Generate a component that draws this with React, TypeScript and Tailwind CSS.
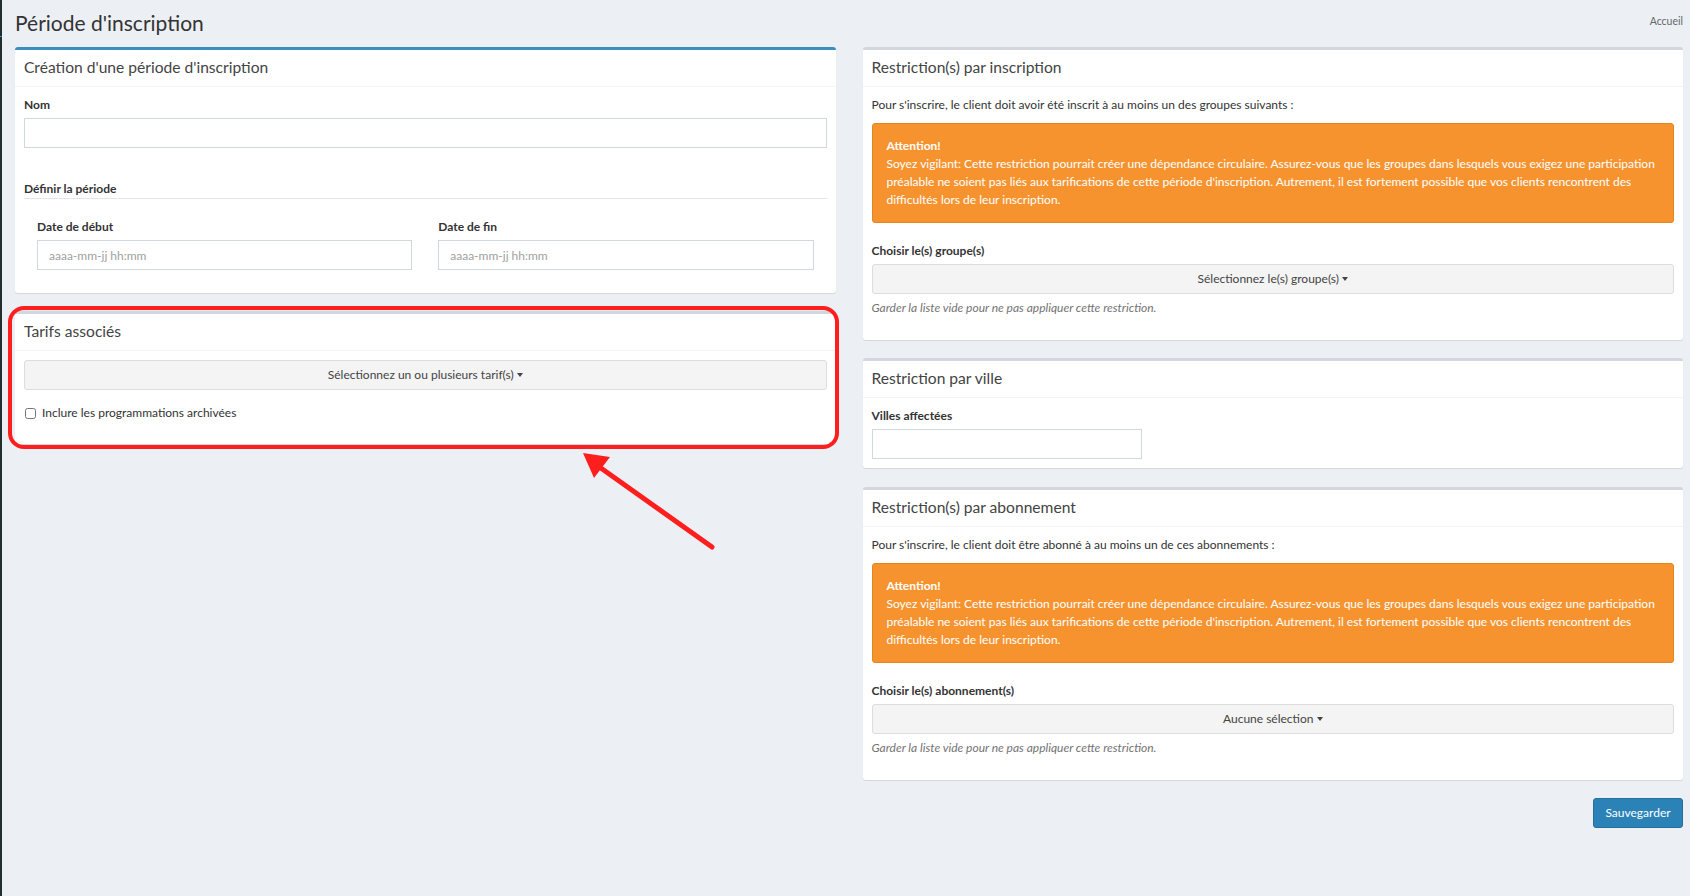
import type { ReactNode } from 'react';

/* ─── Small building blocks ────────────────────────────────────── */

function Box({
  title,
  accent = false,
  className = '',
  children,
}: {
  title: string;
  accent?: boolean;
  className?: string;
  children: ReactNode;
}) {
  return (
    <div
      className={`bg-white rounded-[3px] border-t-[3px] shadow-[0_1px_1px_rgba(0,0,0,0.1)] ${
        accent ? 'border-[#3c8dbc]' : 'border-[#d2d6de]'
      } ${className}`}
    >
      <div className="h-[37px] px-[9px] flex items-center border-b border-[#f4f4f4]">
        <h3 className="text-[15.6px] leading-none text-[#444] -mt-[1px]">{title}</h3>
      </div>
      {children}
    </div>
  );
}

function Label({ children }: { children: ReactNode }) {
  return <label className="block text-[12px] leading-[18px] font-bold text-[#333]">{children}</label>;
}

function TextInput({ placeholder, className = '' }: { placeholder?: string; className?: string }) {
  return (
    <input
      type="text"
      placeholder={placeholder}
      className={`block h-[30px] border border-[#d2d6de] bg-white px-[11px] text-[12px] text-[#555] placeholder:text-[#a0a0a0] outline-none ${className}`}
    />
  );
}

function Dropdown({ label }: { label: string }) {
  return (
    <button
      type="button"
      className="w-full h-[30px] flex items-center justify-center gap-[3px] bg-[#f4f4f4] border border-[#ddd] rounded-[3px] text-[12px] text-[#444]"
    >
      {label}
      <span className="inline-block w-0 h-0 border-x-[3.5px] border-x-transparent border-t-[4px] border-t-[#444]" />
    </button>
  );
}

function HelpText() {
  return (
    <p className="mt-[5px] text-[12px] leading-[18px] italic text-[#737373]">
      Garder la liste vide pour ne pas appliquer cette restriction.
    </p>
  );
}

function CircularWarning() {
  return (
    <div className="mt-[9px] border border-[#e3861f] bg-[#f7932f] rounded-[3px] px-[14px] py-[13px] text-[12px] leading-[18px] text-white">
      <strong className="block font-bold">Attention!</strong>
      <span className="block whitespace-nowrap">
        Soyez vigilant: Cette restriction pourrait créer une dépendance circulaire. Assurez-vous que les groupes
        dans lesquels vous exigez une participation
      </span>
      <span className="block whitespace-nowrap">
        préalable ne soient pas liés aux tarifications de cette période d'inscription. Autrement, il est fortement
        possible que vos clients rencontrent des
      </span>
      <span className="block">difficultés lors de leur inscription.</span>
    </div>
  );
}

/* ─── Callout drawn around the tariffs box ─────────────────────── */

function CalloutArrow() {
  return (
    <svg
      className="absolute left-[555px] top-[130px] pointer-events-none"
      width="150"
      height="115"
      viewBox="0 0 150 115"
      fill="none"
    >
      <line x1="28" y1="25" x2="142" y2="106" stroke="#ff1e1e" strokeWidth="5" strokeLinecap="round" />
      <polygon points="13,12 40,16 24,37" fill="#ff1e1e" />
    </svg>
  );
}

/* ─── Page ─────────────────────────────────────────────────────── */

export default function App() {
  return (
    <div className="min-h-[896px] flex bg-[#ecf0f5] font-['Lato',sans-serif] text-[#333]">
      {/* sidebar edge */}
      <div className="w-[2px] flex flex-col shrink-0">
        <div className="h-[36px] bg-[#222d32]" />
        <div className="h-[1px] bg-[#3c8dbc]" />
        <div className="flex-1 bg-[#222d32]" />
      </div>

      <div className="flex-1 pl-[13px] pr-[7px]">
        <div className="h-[47px] pb-[3px] flex items-center justify-between">
          <h1 className="text-[21px] leading-none text-[#333]">Période d'inscription</h1>
          <span className="text-[10.5px] text-[#666]">Accueil</span>
        </div>

        <div className="grid grid-cols-2 gap-x-[27px] items-start">
          {/* left column */}
          <div>
            <Box title="Création d'une période d'inscription" accent>
              <div className="px-[9px] pt-[9px] pb-[23px]">
                <Label>Nom</Label>
                <TextInput className="mt-[4px] w-full" />

                <div className="mt-[32px] border-b border-[#e5e5e5] text-[12px] leading-[18px] font-bold">
                  Définir la période
                </div>

                <div className="mt-[19px] grid grid-cols-2">
                  <div className="px-[13px]">
                    <Label>Date de début</Label>
                    <TextInput className="mt-[4px] w-full" placeholder="aaaa-mm-jj hh:mm" />
                  </div>
                  <div className="px-[13px]">
                    <Label>Date de fin</Label>
                    <TextInput className="mt-[4px] w-full" placeholder="aaaa-mm-jj hh:mm" />
                  </div>
                </div>
              </div>
            </Box>

            <div className="relative mt-[18px]">
              <Box title="Tarifs associés">
                <div className="px-[9px] pt-[9px] pb-[22px]">
                  <Dropdown label="Sélectionnez un ou plusieurs tarif(s)" />
                  <label className="mt-[14px] flex items-center gap-[6px] text-[12px] leading-[18px]">
                    <input type="checkbox" className="w-[11px] h-[11px] m-0 ml-[1px]" />
                    Inclure les programmations archivées
                  </label>
                </div>
              </Box>
              <div className="absolute -top-[5px] -bottom-[5px] -left-[7px] -right-[3px] border-4 border-[#ff1e1e] rounded-[16px] pointer-events-none" />
              <CalloutArrow />
            </div>
          </div>

          {/* right column */}
          <div>
            <Box title="Restriction(s) par inscription">
              <div className="px-[9px] pt-[9px] pb-[23px]">
                <p className="text-[12px] leading-[18px]">
                  Pour s'inscrire, le client doit avoir été inscrit à au moins un des groupes suivants :
                </p>
                <CircularWarning />
                <div className="mt-[19px]">
                  <Label>Choisir le(s) groupe(s)</Label>
                </div>
                <div className="mt-[4px]">
                  <Dropdown label="Sélectionnez le(s) groupe(s)" />
                </div>
                <HelpText />
              </div>
            </Box>

            <Box title="Restriction par ville" className="mt-[18px]">
              <div className="px-[9px] pt-[9px] pb-[9px]">
                <Label>Villes affectées</Label>
                <TextInput className="mt-[4px] w-[270px]" />
              </div>
            </Box>

            <Box title="Restriction(s) par abonnement" className="mt-[19px]">
              <div className="px-[9px] pt-[9px] pb-[23px]">
                <p className="text-[12px] leading-[18px]">
                  Pour s'inscrire, le client doit être abonné à au moins un de ces abonnements :
                </p>
                <CircularWarning />
                <div className="mt-[19px]">
                  <Label>Choisir le(s) abonnement(s)</Label>
                </div>
                <div className="mt-[4px]">
                  <Dropdown label="Aucune sélection" />
                </div>
                <HelpText />
              </div>
            </Box>

            <div className="mt-[18px] flex justify-end">
              <button
                type="button"
                className="h-[30px] w-[90px] rounded-[3px] bg-[#2b82b7] border border-[#256f9d] text-white text-[12px]"
              >
                Sauvegarder
              </button>
            </div>
          </div>
        </div>
      </div>
    </div>
  );
}
